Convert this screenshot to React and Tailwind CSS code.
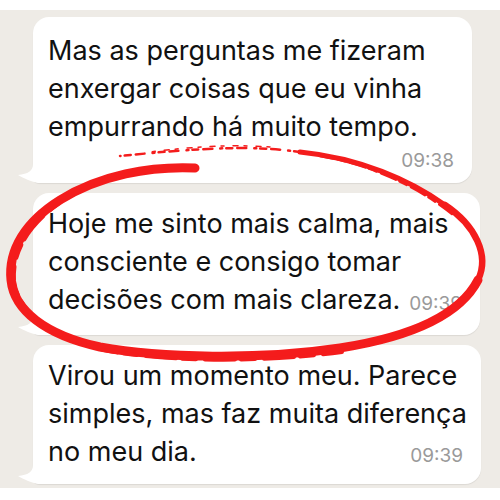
import React from "react";

const messages = [
  {
    id: 1,
    width: "w-[439px]",
    pad: "pt-[15px] pb-[11px]",
    lines: ["Mas as perguntas me fizeram", "enxergar coisas que eu vinha", "empurrando há muito tempo."],
    time: "09:38",
    timeOwnRow: true,
  },
  {
    id: 2,
    width: "w-[447px]",
    pad: "pt-[12px] pb-[16px]",
    lines: ["Hoje me sinto mais calma, mais", "consciente e consigo tomar", "decisões com mais clareza."],
    time: "09:39",
  },
  {
    id: 3,
    width: "w-[448px]",
    pad: "pt-[12px] pb-[13px]",
    lines: ["Virou um momento meu. Parece", "simples, mas faz muita diferença", "no meu dia."],
    time: "09:39",
  },
];

function Tail() {
  return (
    <svg
      className="absolute left-[-15px] bottom-0"
      width="25"
      height="23"
      viewBox="0 0 25 23"
    >
      <path d="M15 4 C15 11 10 14 0 15 C6 18 12 22 22 23 L25 23 L25 4 Z" fill="#ffffff" />
    </svg>
  );
}

function Bubble({ msg }) {
  const last = msg.lines.length - 1;
  return (
    <div
      className={`relative ${msg.width} ${msg.pad} bg-white rounded-[16px] rounded-bl-[6px] pl-[15px] pr-[18px] shadow-[0_1px_1px_rgba(0,0,0,0.08)]`}
    >
      <Tail />
      {msg.lines.map((line, i) =>
        i === last && !msg.timeOwnRow ? (
          <div key={i} className="flex items-end justify-between whitespace-nowrap">
            <span>{line}</span>
            <span className="text-[19px] leading-[22px] tracking-normal text-[#9a9a9a] mb-[4px]">{msg.time}</span>
          </div>
        ) : (
          <div key={i} className="whitespace-nowrap">{line}</div>
        )
      )}
      {msg.timeOwnRow && (
        <div className="flex justify-end mt-[4px] text-[19px] leading-[22px] tracking-normal text-[#9a9a9a]">
          {msg.time}
        </div>
      )}
    </div>
  );
}

export default function App() {
  return (
    <div className="relative w-[500px] h-[500px] bg-white overflow-hidden font-['Inter','Liberation_Sans',sans-serif] text-[27px] leading-[38px] tracking-[0px] text-[#111111]">
      <div className="mt-[10px] h-[478px] bg-[#eeebe6] flex flex-col gap-[10px] pl-[33px] pt-[7px]">
        {messages.map((m) => (
          <Bubble key={m.id} msg={m} />
        ))}
      </div>

      {/* red brush circle */}
      <svg className="absolute inset-0 pointer-events-none" width="500" height="500" viewBox="0 0 500 500">
        <g fill="none" stroke="#f41c1c" strokeLinecap="round">
          <path
            d="M195 168 C150 166 100 175 60 200 C25 222 8 250 11 280 C14 310 45 335 100 347 C160 358 260 360 340 348 C410 337 460 315 478 280"
            strokeWidth="9"
          />
          <path
            d="M150 171 C110 176 80 188 58 204 C28 226 12 252 14 281 C18 312 50 336 104 350 C165 362 260 363 342 352"
            strokeWidth="4"
            strokeDasharray="30 6 14 9"
          />
          <path d="M478 280 C490 255 475 225 445 205" strokeWidth="6.5" />
          <path d="M445 205 C410 180 360 158 300 152" strokeWidth="5" />
          <path d="M452 214 C420 188 370 164 320 156" strokeWidth="2.5" strokeDasharray="16 5 8 4" />
          <path d="M300 152 C250 145 200 148 120 156" strokeWidth="2.5" strokeDasharray="6 4 2 8 9 5" />
          <path d="M270 147 C230 144 190 147 150 152" strokeWidth="1.5" strokeDasharray="3 6 5 9" />
        </g>
      </svg>
    </div>
  );
}
